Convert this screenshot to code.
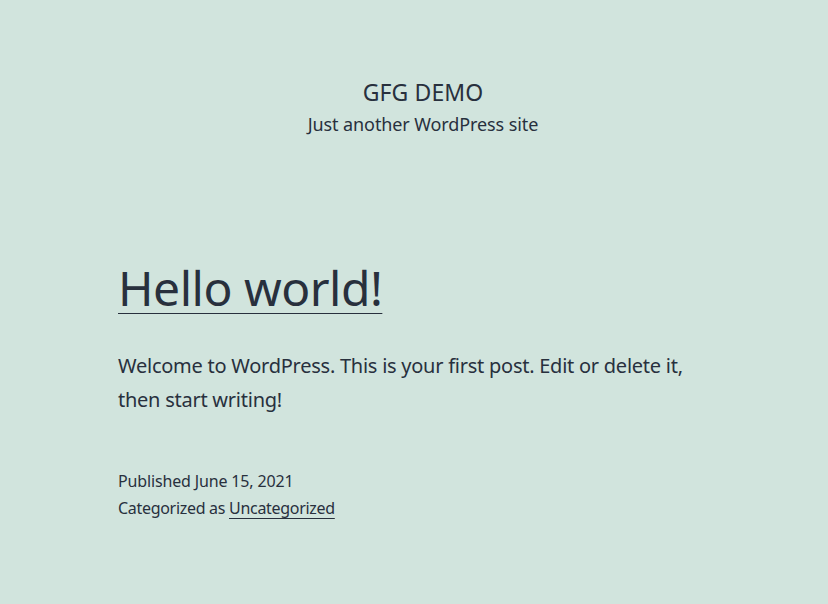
export default function App() {
  return (
    <div
      className="bg-[#d1e4dd] min-h-screen text-[#28303d]"
      style={{ fontFamily: '"Noto Sans", sans-serif' }}
    >
      <header className="pt-[77px] pl-[18px] text-center">
        <p className="text-[23px] leading-[30px] uppercase tracking-[0.1px]">GFG Demo</p>
        <p className="mt-[2px] text-[18px] leading-[30px] tracking-[-0.1px]">Just another WordPress site</p>
      </header>
      <main className="mx-[118px] mt-[121px]">
        <h1 className="text-[48px] leading-[56px] tracking-[-0.5px]">
          <a className="underline decoration-1 underline-offset-[7px]">Hello world!</a>
        </h1>
        <p className="mt-[33px] text-[20px] leading-[34px] tracking-[-0.25px]">
          Welcome to WordPress. This is your first post. Edit or delete it, then start writing!
        </p>
        <div className="mt-[51px] text-[16px] leading-[27px]">
          <p className="tracking-[-0.15px]">Published June 15, 2021</p>
          <p className="tracking-[-0.3px]">
            Categorized as{" "}
            <a className="underline decoration-1 underline-offset-[4px]">Uncategorized</a>
          </p>
        </div>
      </main>
    </div>
  );
}
